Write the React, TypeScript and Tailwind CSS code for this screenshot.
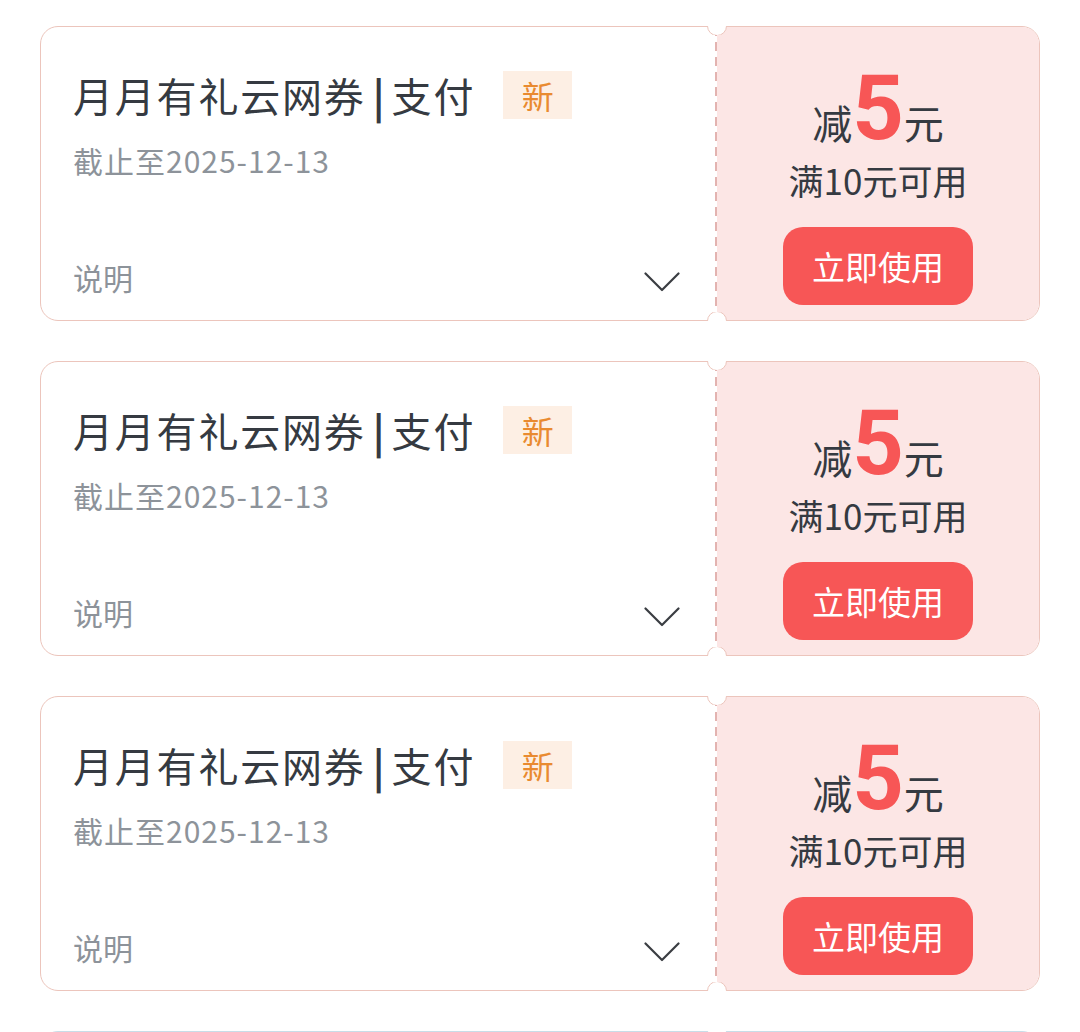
import React from "react";

const CJK = "font-['Noto_Sans_CJK_SC','Noto_Sans',sans-serif]";

function Notch({ pos, border }: { pos: "top" | "bottom"; border: string }) {
  if (pos === "top") {
    return (
      <div className="absolute top-[-1px] left-[666px] h-[9px] w-[20px] overflow-hidden">
        <div className={`absolute top-[-10px] left-0 h-[20px] w-[20px] rounded-full border bg-white ${border}`} />
      </div>
    );
  }
  return (
    <div className="absolute bottom-[-1px] left-[666px] h-[9px] w-[20px] overflow-hidden">
      <div className={`absolute bottom-[-10px] left-0 h-[20px] w-[20px] rounded-full border bg-white ${border}`} />
    </div>
  );
}

function Chevron() {
  return (
    <svg width="36" height="20" viewBox="0 0 36 20" fill="none">
      <path d="M1.5 1.5 L18 18 L34.5 1.5" stroke="#3a3d42" strokeWidth="2.2" strokeLinecap="round" strokeLinejoin="round" />
    </svg>
  );
}

function Coupon({ blue = false }: { blue?: boolean }) {
  const border = blue ? "border-[#c8dde8]" : "border-[#ecc5bc]";
  return (
    <div className={`relative flex h-[295px] w-[1000px] rounded-[18px] border ${border} bg-white ${CJK}`}>
      <div className="flex w-[674px] flex-col pl-[32px] pr-[35px] pt-[44px] pb-[25px]">
        <div className="flex h-[48px] items-center">
          <span className="text-[40px] leading-[48px] tracking-[1.8px] text-[#353a41]">月月有礼云网券</span>
          <span className="inline-block w-[26px] text-center text-[40px] font-bold leading-[48px] text-[#353a41]">|</span>
          <span className="text-[40px] leading-[48px] tracking-[1.8px] text-[#353a41]">支付</span>
          <span className="ml-[28px] flex h-[48px] w-[69px] items-center justify-center bg-[#fdefe4] text-[32px] leading-none text-[#e98a30]">
            新
          </span>
        </div>
        <div className="mt-[23px] text-[30px] leading-[36px] tracking-[1px] text-[#8d939a]">截止至2025-12-13</div>
        <div className="mt-auto flex items-end justify-between">
          <span className="text-[30px] leading-[36px] text-[#8d939a]">说明</span>
          <span className="mb-[3px] flex">
            <Chevron />
          </span>
        </div>
      </div>
      <div
        className={`w-[2px] ${
          blue
            ? "bg-[repeating-linear-gradient(to_bottom,#bcd3df_0_9px,transparent_9px_15px)]"
            : "bg-[repeating-linear-gradient(to_bottom,#e3b3b0_0_9px,transparent_9px_15px)]"
        }`}
      />
      <div
        className={`flex flex-1 flex-col items-center rounded-r-[17px] pt-[37px] ${
          blue ? "bg-[#e6f1f6]" : "bg-[#fce6e5]"
        }`}
      >
        <div className="flex items-baseline">
          <span className="text-[40px] leading-none text-[#353a41]">减</span>
          <span className="font-['Roboto',sans-serif] text-[90px] font-bold leading-none text-[#f75656]">5</span>
          <span className="text-[40px] leading-none text-[#353a41]">元</span>
        </div>
        <div className="mt-[5px] text-[35px] leading-[42px] text-[#353a41]">满10元可用</div>
        <button className="mt-[26px] flex h-[78px] w-[190px] items-center justify-center rounded-[20px] bg-[#f75656] text-[33px] leading-none text-white">
          立即使用
        </button>
      </div>
      <Notch pos="top" border={border} />
      <Notch pos="bottom" border={border} />
    </div>
  );
}

export default function App() {
  return (
    <div className="min-h-screen bg-white">
      <div className="flex flex-col gap-[40px] pl-[40px] pt-[26px] pb-[40px]">
        <Coupon />
        <Coupon />
        <Coupon />
        <Coupon blue />
      </div>
    </div>
  );
}
